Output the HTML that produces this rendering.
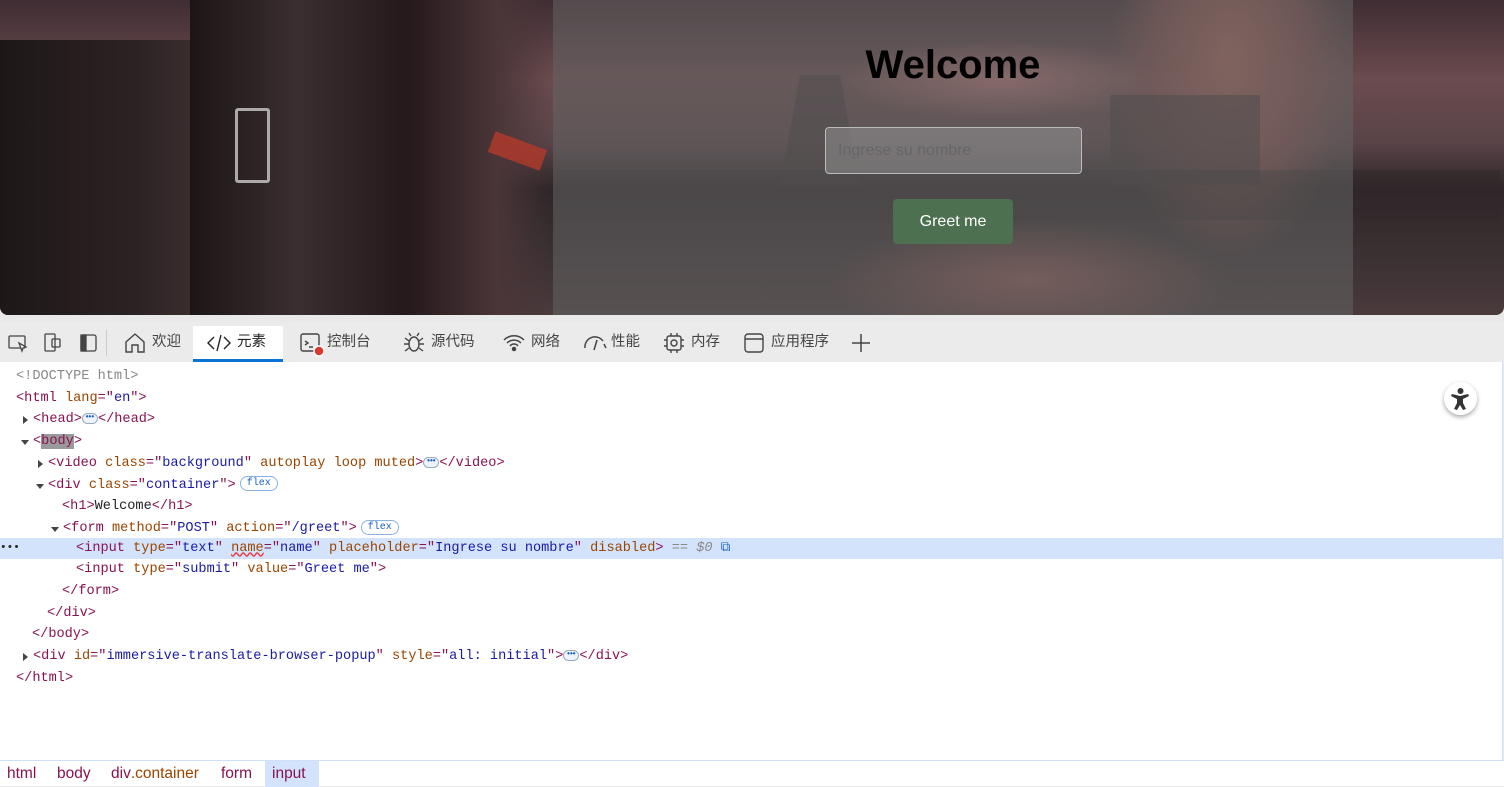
<!DOCTYPE html>
<html><head><meta charset="utf-8"><style>
*{margin:0;padding:0;box-sizing:border-box}
body{width:1504px;height:786px;overflow:hidden;background:#e9e9e9;font-family:"Liberation Sans","Noto Sans CJK SC",sans-serif;position:relative}
#top{position:absolute;left:0;top:0;width:1504px;height:315px;border-radius:0 0 8px 8px;overflow:hidden;
background:
radial-gradient(ellipse 120px 200px at 1230px 60px,#a0625a 0%,rgba(140,80,75,.7) 60%,transparent 100%),
radial-gradient(ellipse 160px 40px at 1000px 80px,#b07070,transparent),
radial-gradient(ellipse 200px 60px at 1030px 280px,#8a5550,transparent),
linear-gradient(180deg,#3f2d33 0%,#6a4b4e 25%,#5a4448 45%,#2e2628 60%,#3a3032 80%,#4a3a3c 100%);}
#astro{position:absolute;left:190px;top:0;width:360px;height:315px;background:linear-gradient(90deg,#1c1516 0%,#3a2e30 30%,#25191b 60%,#4a3538 85%,transparent 100%)}
#leftrock{position:absolute;left:0;top:40px;width:190px;height:275px;background:linear-gradient(90deg,#1e1718,#2b2223 70%,#3a2d2e)}
#cont{position:absolute;left:553px;top:0;width:800px;height:315px;background:rgba(100,100,100,.55)}
.mesa{position:absolute;background:#3e3436;opacity:.6}
h1{position:absolute;left:553px;width:800px;top:43px;text-align:center;font-size:40px;font-weight:bold;color:#000}
#inp{position:absolute;left:825px;top:127px;width:257px;height:47px;border:1px solid #bbb;border-radius:4px;background:rgba(150,150,150,.5);color:#666;font-size:16px;line-height:45px;padding-left:12px}
#btn{position:absolute;left:893px;top:199px;width:120px;height:45px;background:#4c7050;border-radius:4px;color:#fff;font-size:16px;text-align:center;line-height:45px}
#tb{position:absolute;left:0;top:322px;width:1504px;height:40px;background:#ebebeb;font-size:14.5px;color:#444}
.t{position:absolute;top:0;height:40px;line-height:40px;white-space:nowrap}
#act{position:absolute;left:193px;top:4px;width:90px;height:36px;background:#fff;border-bottom:3px solid #0a72d5}
#dom{position:absolute;left:0;top:362px;width:1503px;height:398px;background:#fff;border-right:1px solid #cfe0f5;font-family:"Liberation Mono",monospace;font-size:13.6px}
.r{position:absolute;height:21.7px;line-height:21.7px;white-space:pre;left:0;width:100%}
.r>b{font-weight:normal;position:absolute;top:0}
.g{color:#888}.tg{color:#881350}.an{color:#994500}.av{color:#1a1aa6}.tx{color:#222}
.tri{position:absolute;width:0;height:0;border:4px solid transparent}
.tr{border-left:5px solid #444;border-right:0;top:7px}.td{border-top:5px solid #444;border-bottom:0;top:9px}
.dots{display:inline-block;width:16px;height:11px;border:1px solid #9ab;border-radius:6px;font-size:8px;line-height:6px;text-align:center;color:#1a5ec8;vertical-align:middle;font-family:"Liberation Sans",sans-serif;font-weight:bold;background:#eef4ff}
.fx{display:inline-block;border:1px solid #8ab0e0;border-radius:8px;font-size:10px;line-height:13px;padding:0 6px;color:#1a5ec8;vertical-align:middle;font-family:"Liberation Mono",monospace;margin-left:4px}
#bc{position:absolute;left:0;top:760px;width:1504px;height:26px;background:#fff;border-top:1px solid #cfe0f5;font-size:15.5px;color:#881350}
#bc span{position:absolute;top:0;line-height:26px;height:26px}
</style></head><body>
<div id="top"><div id="leftrock"></div><div id="astro"></div>
<div style="position:absolute;left:235px;top:108px;width:35px;height:75px;border:3px solid #ccc;border-radius:3px;opacity:.8"></div>
<div style="position:absolute;left:490px;top:140px;width:55px;height:22px;background:#b43a2a;transform:rotate(20deg);opacity:.8"></div>
<div class="mesa" style="left:780px;top:75px;width:80px;height:110px;clip-path:polygon(25% 0,75% 0,100% 100%,0 100%)"></div>
<div class="mesa" style="left:1110px;top:95px;width:150px;height:90px"></div>
<div class="mesa" style="left:560px;top:170px;width:940px;height:50px;background:#2f2729;opacity:.5"></div>
<div id="cont"></div></div>
<h1>Welcome</h1>
<div id="inp">Ingrese su nombre</div>
<div id="btn">Greet me</div>
<div id="tb">
<svg style="position:absolute;left:8px;top:11px" width="100" height="20" fill="none" stroke="#444" stroke-width="1.3">
<rect x="1" y="3" width="16" height="12" rx="1"/><path d="M11 10l3 8 1-3 3-1z" fill="#fff"/>
<rect x="37" y="1" width="10" height="17" rx="1"/><rect x="44" y="6" width="8" height="8" rx="1"/>
<rect x="73" y="2" width="15" height="16" rx="2"/><rect x="73" y="2" width="5" height="16" fill="#444"/>
</svg>
<div style="position:absolute;left:106px;top:8px;width:1px;height:26px;background:#ccc"></div>
<div id="act"></div>
<svg style="position:absolute;left:124px;top:10px" width="22" height="22" fill="none" stroke="#444" stroke-width="1.4"><path d="M2 10L11 2l9 8v10h-6v-7h-6v7H2z"/></svg>
<span class="t" style="left:152px">欢迎</span>
<svg style="position:absolute;left:207px;top:12px" width="24" height="18" fill="none" stroke="#222" stroke-width="1.4"><path d="M7 3L1 9l6 6M17 3l6 6-6 6M14 1L10 17"/></svg>
<span class="t" style="left:237px;color:#222">元素</span>
<svg style="position:absolute;left:300px;top:11px" width="24" height="24" fill="none" stroke="#444" stroke-width="1.4"><rect x="1" y="1" width="18" height="17" rx="2"/><path d="M5 8l3 2-3 2M9 14h4"/><circle cx="19" cy="18" r="5" fill="#d63a2e" stroke="#fff"/></svg>
<span class="t" style="left:327px">控制台</span>
<svg style="position:absolute;left:403px;top:10px" width="22" height="22" fill="none" stroke="#444" stroke-width="1.4"><ellipse cx="11" cy="12" rx="5" ry="7"/><path d="M2 6l4 3M20 6l-4 3M1 12h5M21 12h-5M2 19l4-3M20 19l-4-3M8 4l-2-3M14 4l2-3"/></svg>
<span class="t" style="left:431px">源代码</span>
<svg style="position:absolute;left:503px;top:11px" width="22" height="20" fill="none" stroke="#444" stroke-width="1.5"><path d="M1 7a14 14 0 0 1 20 0M4 10a10 10 0 0 1 14 0M7 13a5 5 0 0 1 8 0"/><circle cx="11" cy="16" r="1.5" fill="#444"/></svg>
<span class="t" style="left:531px">网络</span>
<svg style="position:absolute;left:582px;top:11px" width="26" height="20" fill="none" stroke="#444" stroke-width="1.5"><path d="M3 15A10 10 0 0 1 21 8M15 7l-3 10M22 11l2 4"/></svg>
<span class="t" style="left:611px">性能</span>
<svg style="position:absolute;left:663px;top:10px" width="22" height="22" fill="none" stroke="#444" stroke-width="1.4"><rect x="4" y="4" width="14" height="14" rx="2"/><circle cx="11" cy="11" r="3"/><path d="M8 1v3M14 1v3M8 18v3M14 18v3M1 8h3M1 14h3M18 8h3M18 14h3"/></svg>
<span class="t" style="left:691px">内存</span>
<svg style="position:absolute;left:744px;top:11px" width="20" height="20" fill="none" stroke="#444" stroke-width="1.4"><rect x="1" y="1" width="18" height="18" rx="3"/><path d="M1 6h18"/></svg>
<span class="t" style="left:771px">应用程序</span>
<svg style="position:absolute;left:852px;top:12px" width="18" height="18" stroke="#444" stroke-width="1.5"><path d="M9 0v18M0 9h18"/></svg>
</div>
<div id="dom">
<div class="r" style="top:4px"><b style="left:16px" class="g">&lt;!DOCTYPE html&gt;</b></div>
<div class="r" style="top:25.7px"><b style="left:16px"><span class="tg">&lt;html</span> <span class="an">lang</span><span class="tg">="</span><span class="av">en</span><span class="tg">"&gt;</span></b></div>
<div class="r" style="top:47.4px"><span class="tri tr" style="left:23px"></span><b style="left:33px"><span class="tg">&lt;head&gt;</span><span class="dots">•••</span><span class="tg">&lt;/head&gt;</span></b></div>
<div class="r" style="top:69.1px"><span class="tri td" style="left:21px"></span><b style="left:33px"><span class="tg">&lt;<span style="background:#9a9a9a">body</span>&gt;</span></b></div>
<div class="r" style="top:90.8px"><span class="tri tr" style="left:38px"></span><b style="left:48px"><span class="tg">&lt;video</span> <span class="an">class</span><span class="tg">="</span><span class="av">background</span><span class="tg">"</span> <span class="an">autoplay loop muted</span><span class="tg">&gt;</span><span class="dots">•••</span><span class="tg">&lt;/video&gt;</span></b></div>
<div class="r" style="top:112.5px"><span class="tri td" style="left:36px"></span><b style="left:48px"><span class="tg">&lt;div</span> <span class="an">class</span><span class="tg">="</span><span class="av">container</span><span class="tg">"&gt;</span><span class="fx">flex</span></b></div>
<div class="r" style="top:134.2px"><b style="left:62px"><span class="tg">&lt;h1&gt;</span><span class="tx">Welcome</span><span class="tg">&lt;/h1&gt;</span></b></div>
<div class="r" style="top:155.9px"><span class="tri td" style="left:51px"></span><b style="left:63px"><span class="tg">&lt;form</span> <span class="an">method</span><span class="tg">="</span><span class="av">POST</span><span class="tg">"</span> <span class="an">action</span><span class="tg">="</span><span class="av">/greet</span><span class="tg">"&gt;</span><span class="fx">flex</span></b></div>
<div class="r" style="top:175.6px;background:#d4e3fc"><b style="left:0;font-size:11px" class="tx">•••</b><b style="left:76px"><span class="tg">&lt;input</span> <span class="an">type</span><span class="tg">="</span><span class="av">text</span><span class="tg">"</span> <span class="an" style="text-decoration:underline wavy #e33">name</span><span class="tg">="</span><span class="av">name</span><span class="tg">"</span> <span class="an">placeholder</span><span class="tg">="</span><span class="av">Ingrese su nombre</span><span class="tg">"</span> <span class="an">disabled</span><span class="tg">&gt;</span> <span class="g" style="font-style:italic">== $0</span> <span style="color:#1a5ec8">⧉</span></b></div>
<div class="r" style="top:197.3px"><b style="left:76px"><span class="tg">&lt;input</span> <span class="an">type</span><span class="tg">="</span><span class="av">submit</span><span class="tg">"</span> <span class="an">value</span><span class="tg">="</span><span class="av">Greet me</span><span class="tg">"&gt;</span></b></div>
<div class="r" style="top:219px"><b style="left:62px" class="tg">&lt;/form&gt;</b></div>
<div class="r" style="top:240.7px"><b style="left:47px" class="tg">&lt;/div&gt;</b></div>
<div class="r" style="top:262.4px"><b style="left:32px" class="tg">&lt;/body&gt;</b></div>
<div class="r" style="top:284.1px"><span class="tri tr" style="left:23px"></span><b style="left:33px"><span class="tg">&lt;div</span> <span class="an">id</span><span class="tg">="</span><span class="av">immersive-translate-browser-popup</span><span class="tg">"</span> <span class="an">style</span><span class="tg">="</span><span class="av">all: initial</span><span class="tg">"&gt;</span><span class="dots">•••</span><span class="tg">&lt;/div&gt;</span></b></div>
<div class="r" style="top:305.8px"><b style="left:16px" class="tg">&lt;/html&gt;</b></div>
<div style="position:absolute;left:1444px;top:20px;width:33px;height:33px;border-radius:50%;background:#fff;box-shadow:0 2px 5px rgba(0,0,0,.35)">
<svg width="33" height="33"><circle cx="16.5" cy="9" r="3" fill="#333"/><path d="M8 12l8 2 8-2 1 2-6 3v4l3 6-3 1-3-5-3 5-3-1 3-6v-4l-6-3z" fill="#333"/></svg></div>
</div>
<div id="bc">
<span style="left:7px">html</span><span style="left:57px">body</span><span style="left:111px">div<span style="color:#994500">.container</span></span><span style="left:221px">form</span>
<span style="left:265px;width:54px;background:#d4e3fc;padding-left:7px">input</span>
</div>
</body></html>
